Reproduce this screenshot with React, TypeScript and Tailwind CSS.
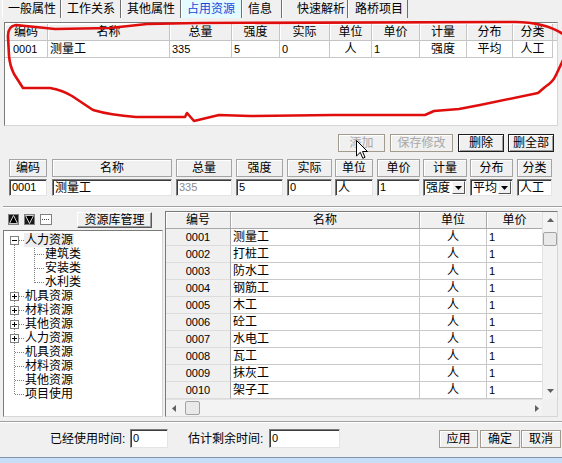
import React from 'react';

const tabs = [
  { label: '一般属性', cls: 'w-[59px] pl-[5px]', sel: false },
  { label: '工作关系', cls: 'w-[60px] pl-[5px]', sel: false },
  { label: '其他属性', cls: 'w-[60px] pl-[5px]', sel: false },
  { label: '占用资源', cls: 'w-[61px] pl-[5px]', sel: true },
  { label: '信息', cls: 'w-[40px] pl-[5px]', sel: false },
  { label: '快速解析', cls: 'w-[66px] pl-[14px]', sel: false },
  { label: '路桥项目', cls: 'w-[60px] pl-[6px]', sel: false },
];

const topCols = [
  { label: '编码', w: 'w-[43px]', v: '0001', a: 'pl-[8px] text-[11px]' },
  { label: '名称', w: 'w-[122px]', v: '测量工', a: 'pl-[2px]' },
  { label: '总量', w: 'w-[62px]', v: '335', a: 'pl-[2px] text-[11px]' },
  { label: '强度', w: 'w-[48px]', v: '5', a: 'pl-[2px] text-[11px]' },
  { label: '实际', w: 'w-[50px]', v: '0', a: 'pl-[2px] text-[11px]' },
  { label: '单位', w: 'w-[42px]', v: '人', a: 'justify-center' },
  { label: '单价', w: 'w-[48px]', v: '1', a: 'pl-[2px] text-[11px]' },
  { label: '计量', w: 'w-[47px]', v: '强度', a: 'justify-center' },
  { label: '分布', w: 'w-[46px]', v: '平均', a: 'justify-center' },
  { label: '分类', w: 'w-[40px]', v: '人工', a: 'justify-center' },
];

const editCols = [
  { label: '编码', cls: 'ml-[9px] w-[38px]', v: '0001', kind: 'num' },
  { label: '名称', cls: 'ml-[5px] w-[120px]', v: '测量工', kind: 'text' },
  { label: '总量', cls: 'ml-[4px] w-[56px]', v: '335', kind: 'dis' },
  { label: '强度', cls: 'ml-[4px] w-[47px]', v: '5', kind: 'num' },
  { label: '实际', cls: 'ml-[4px] w-[45px]', v: '0', kind: 'num' },
  { label: '单位', cls: 'ml-[3px] w-[38px]', v: '人', kind: 'text' },
  { label: '单价', cls: 'ml-[4px] w-[43px]', v: '1', kind: 'num' },
  { label: '计量', cls: 'ml-[3px] w-[44px]', v: '强度', kind: 'combo' },
  { label: '分布', cls: 'ml-[3px] w-[43px]', v: '平均', kind: 'combo' },
  { label: '分类', cls: 'ml-[4px] w-[35px]', v: '人工', kind: 'text' },
];

const treeRows = [
  { t: '人力资源', lvl: 0, box: 'minus', sel: true },
  { t: '建筑类', lvl: 1, box: '', sel: false },
  { t: '安装类', lvl: 1, box: '', sel: false },
  { t: '水利类', lvl: 1, box: '', sel: false },
  { t: '机具资源', lvl: 0, box: 'plus', sel: false },
  { t: '材料资源', lvl: 0, box: 'plus', sel: false },
  { t: '其他资源', lvl: 0, box: 'plus', sel: false },
  { t: '人力资源', lvl: 0, box: 'plus', sel: false },
  { t: '机具资源', lvl: 0, box: '', sel: false },
  { t: '材料资源', lvl: 0, box: '', sel: false },
  { t: '其他资源', lvl: 0, box: '', sel: false },
  { t: '项目使用', lvl: 0, box: '', sel: false },
];

const gridRows = [
  ['0001', '测量工'],
  ['0002', '打桩工'],
  ['0003', '防水工'],
  ['0004', '钢筋工'],
  ['0005', '木工'],
  ['0006', '砼工'],
  ['0007', '水电工'],
  ['0008', '瓦工'],
  ['0009', '抹灰工'],
  ['0010', '架子工'],
];

const sunken =
  'border border-t-[#7c7c7c] border-l-[#7c7c7c] border-r-[#e4e4e4] border-b-[#e4e4e4] shadow-[inset_1px_1px_0_#3c3c3c]';

function TriUp() {
  return (
    <svg width="7" height="4" viewBox="0 0 7 4">
      <path d="M0 4 L3.5 0 L7 4Z" fill="#606060" />
    </svg>
  );
}
function TriDown() {
  return (
    <svg width="7" height="4" viewBox="0 0 7 4">
      <path d="M0 0 L3.5 4 L7 0Z" fill="#606060" />
    </svg>
  );
}
function TriLeft() {
  return (
    <svg width="4" height="7" viewBox="0 0 4 7">
      <path d="M4 0 L0 3.5 L4 7Z" fill="#606060" />
    </svg>
  );
}
function TriRight() {
  return (
    <svg width="4" height="7" viewBox="0 0 4 7">
      <path d="M0 0 L4 3.5 L0 7Z" fill="#606060" />
    </svg>
  );
}

function TreeLines() {
  const cy = (i: number) => 9 + 14 * i + 0.5;
  return (
    <svg className="absolute left-0 top-0" width="158" height="185" viewBox="0 0 158 185" shapeRendering="crispEdges">
      <line x1="10.5" y1={cy(0)} x2="10.5" y2={cy(11)} stroke="#808080" strokeDasharray="1 1" />
      <line x1="30.5" y1={cy(0) + 5} x2="30.5" y2={cy(3)} stroke="#808080" strokeDasharray="1 1" />
      {treeRows.map((r, i) =>
        r.lvl === 0 ? (
          <line key={'s' + i} x1="11" y1={cy(i)} x2="20" y2={cy(i)} stroke="#808080" strokeDasharray="1 1" />
        ) : (
          <line key={'s' + i} x1="31" y1={cy(i)} x2="40" y2={cy(i)} stroke="#808080" strokeDasharray="1 1" />
        )
      )}
      {treeRows.map((r, i) =>
        r.box ? (
          <g key={'b' + i}>
            <rect x="6.5" y={cy(i) - 4} width="8" height="8" fill="#fff" stroke="#808080" />
            <line x1="8" y1={cy(i)} x2="13" y2={cy(i)} stroke="#000" />
            {r.box === 'plus' ? <line x1="10.5" y1={cy(i) - 2.5} x2="10.5" y2={cy(i) + 2.5} stroke="#000" /> : null}
          </g>
        ) : null
      )}
    </svg>
  );
}

export default function App() {
  return (
    <div className="relative w-[562px] h-[463px] overflow-hidden bg-[#f0f0f0] text-[12px] leading-none text-black font-['Liberation_Sans','Noto_Sans_CJK_SC',sans-serif] flex flex-col">
      {/* Tabs */}
      <div className="flex h-[18px] pl-[2px]">
        {tabs.map((t) => (
          <div
            key={t.label}
            className={`${t.cls} h-full flex items-center border-l border-l-white border-r border-r-[#6e6e6e] ${
              t.sel ? 'bg-[#e4fbff] text-[#1848dc]' : ''
            }`}
          >
            {t.label}
          </div>
        ))}
      </div>

      {/* Top list */}
      <div className="mt-[4px] ml-[4px] w-[554px] h-[104px] bg-white border border-t-[#7a7a7a] border-l-[#7a7a7a] border-r-[#d6d6d6] border-b-[#d6d6d6] pt-[1px]">
        <div className="flex h-[17px]">
          {topCols.map((c) => (
            <div
              key={c.label}
              className={`${c.w} h-full flex items-center justify-center bg-[#f0f0f0] border-r border-b border-[#c4c4c4] shadow-[inset_1px_1px_0_#fff]`}
            >
              {c.label}
            </div>
          ))}
          <div className="flex-1 h-full bg-[#f0f0f0] border-b border-[#c4c4c4]" />
        </div>
        <div className="flex h-[17px]">
          {topCols.map((c) => (
            <div key={c.label} className={`${c.w} ${c.a} h-full flex items-center border-r border-b border-[#c8c8c8]`}>
              {c.v}
            </div>
          ))}
        </div>
      </div>

      {/* Buttons */}
      <div className="mt-[8px] h-[18px] flex">
        <div className="ml-[338px] w-[47px] h-full flex items-center justify-center border border-[#a39a8e] shadow-[inset_1px_1px_0_#fff] text-[#a8a8a8]">
          添加
        </div>
        <div className="ml-[5px] w-[63px] h-full flex items-center justify-center border border-[#a39a8e] shadow-[inset_1px_1px_0_#fff] text-[#a8a8a8]">
          保存修改
        </div>
        <div className="ml-[5px] w-[46px] h-full flex items-center justify-center border border-[#1e1e1e] shadow-[inset_1px_1px_0_#fff,inset_-1px_-1px_0_#a0a0a0]">
          删除
        </div>
        <div className="ml-[4px] w-[46px] h-full flex items-center justify-center border border-[#1e1e1e] shadow-[inset_1px_1px_0_#fff,inset_-1px_-1px_0_#a0a0a0]">
          删全部
        </div>
      </div>

      {/* Edit headers */}
      <div className="mt-[7px] h-[18px] flex">
        {editCols.map((c) => (
          <div
            key={c.label}
            className={`${c.cls} h-full flex items-center justify-center border border-[#a4a4a4] shadow-[inset_1px_1px_0_#fff]`}
          >
            {c.label}
          </div>
        ))}
      </div>

      {/* Edit inputs */}
      <div className="mt-[2px] h-[17px] flex">
        {editCols.map((c) => (
          <div key={c.label} className={`${c.cls} h-full bg-white ${sunken} flex items-center`}>
            {c.kind === 'combo' ? (
              <>
                <span className="pl-[2px] flex-1">{c.v}</span>
                <span className="w-[13px] h-[13px] mr-[1px] bg-[#f0f0f0] border border-t-white border-l-white border-r-[#555] border-b-[#555] flex items-center justify-center">
                  <svg width="7" height="4" viewBox="0 0 7 4">
                    <path d="M0 0 L3.5 4 L7 0Z" fill="#000" />
                  </svg>
                </span>
              </>
            ) : (
              <span
                className={`pl-[2px] ${c.kind === 'num' ? 'text-[11px]' : ''} ${c.kind === 'dis' ? 'text-[11px] text-[#8a8a8a]' : ''}`}
              >
                {c.v}
              </span>
            )}
          </div>
        ))}
      </div>

      {/* Separator */}
      <div className="mt-[10px] ml-[3px] h-[2px] border-t border-t-[#a0a0a0] border-b border-b-white" />

      {/* Lower area */}
      <div className="mt-[3px] h-[206px] flex">
        {/* Left panel */}
        <div className="ml-[3px] w-[160px] flex flex-col">
          <div className="h-[17px] flex items-center">
            <svg className="ml-[5px]" width="11" height="11" viewBox="0 0 11 11">
              <rect x="0.5" y="0.5" width="10" height="10" fill="#1a1a1a" stroke="#808080" />
              <path d="M1.5 9.5 L5.5 1.5 L9.5 9.5Z" fill="#000" stroke="#fff" strokeWidth="0.8" />
            </svg>
            <svg className="ml-[5px]" width="11" height="11" viewBox="0 0 11 11">
              <rect x="0.5" y="0.5" width="10" height="10" fill="#1a1a1a" stroke="#808080" />
              <path d="M1.5 1.5 L5.5 9.5 L9.5 1.5Z" fill="#000" stroke="#fff" strokeWidth="0.8" />
            </svg>
            <svg className="ml-[5px]" width="12" height="11" viewBox="0 0 12 11" shapeRendering="crispEdges">
              <rect x="0.5" y="0.5" width="11" height="10" fill="#fff" stroke="#808080" />
              <line x1="2" y1="5.5" x2="10" y2="5.5" stroke="#404040" strokeDasharray="1 1" />
            </svg>
            <div className="ml-[25px] w-[75px] h-[16px] flex items-center justify-center border border-t-white border-l-white border-r-[#5a5a5a] border-b-[#5a5a5a] shadow-[inset_-1px_-1px_0_#a0a0a0]">
              资源库管理
            </div>
          </div>
          <div className={`mt-[2px] h-[187px] relative bg-white border border-t-[#7a7a7a] border-l-[#7a7a7a] border-r-[#d6d6d6] border-b-[#d6d6d6] pt-[2px]`}>
            <TreeLines />
            {treeRows.map((r, i) => (
              <div key={i} className={`relative h-[14px] flex items-center ${r.lvl === 0 ? 'pl-[20px]' : 'pl-[40px]'}`}>
                <span className={`px-[1px] h-[14px] flex items-center ${r.sel ? 'bg-[#ededed]' : ''}`}>{r.t}</span>
              </div>
            ))}
          </div>
        </div>

        {/* Right grid */}
        <div className="ml-[2px] w-[393px] h-[206px] flex bg-white border border-t-[#7a7a7a] border-l-[#7a7a7a] border-r-[#d6d6d6] border-b-[#d6d6d6]">
          <div className="w-[376px] flex flex-col">
            <div className="h-[17px] flex">
              <div className="w-[65px] h-full flex items-center justify-center bg-[#f0f0f0] border-r border-b border-[#a8a8a8] shadow-[inset_1px_1px_0_#fff]">
                编号
              </div>
              <div className="w-[189px] h-full flex items-center justify-center bg-[#f0f0f0] border-r border-b border-[#a8a8a8] shadow-[inset_1px_1px_0_#fff]">
                名称
              </div>
              <div className="w-[67px] h-full flex items-center justify-center bg-[#f0f0f0] border-r border-b border-[#a8a8a8] shadow-[inset_1px_1px_0_#fff]">
                单位
              </div>
              <div className="w-[55px] h-full flex items-center justify-center bg-[#f0f0f0] border-b border-[#a8a8a8] shadow-[inset_1px_1px_0_#fff]">
                单价
              </div>
            </div>
            {gridRows.map((r) => (
              <div key={r[0]} className="h-[17px] flex">
                <div className="w-[65px] h-full flex items-center justify-center bg-[#f0f0f0] border-r border-b border-r-[#a8a8a8] border-b-[#dcdcdc] text-[11px]">
                  {r[0]}
                </div>
                <div className="w-[189px] h-full flex items-center pl-[2px] border-r border-b border-[#c8c8c8]">{r[1]}</div>
                <div className="w-[67px] h-full flex items-center justify-center border-r border-b border-[#c8c8c8]">人</div>
                <div className="w-[55px] h-full flex items-center pl-[2px] border-b border-[#c8c8c8] text-[11px]">1</div>
              </div>
            ))}
            <div className="h-[17px] flex items-center bg-[#f3f3f3] border-t border-[#e2e2e2]">
              <div className="w-[16px] flex justify-center">
                <TriLeft />
              </div>
              <div className="ml-[3px] w-[15px] h-[14px] rounded-[2px] border border-[#a3a3a3] bg-[#e9e9e9]" />
              <div className="ml-auto mr-[2px] w-[6px] flex justify-center">
                <TriRight />
              </div>
            </div>
          </div>
          <div className="w-[15px] flex flex-col">
            <div className="h-[187px] bg-[#f3f3f3] border-l border-[#e2e2e2] flex flex-col items-center">
              <div className="h-[16px] flex items-center justify-center">
                <TriUp />
              </div>
              <div className="mt-[4px] w-[14px] h-[14px] rounded-[2px] border border-[#a3a3a3] bg-[#e9e9e9]" />
              <div className="mt-auto h-[16px] flex items-center justify-center">
                <TriDown />
              </div>
            </div>
            <div className="h-[17px] bg-[#f0f0f0]" />
          </div>
        </div>
      </div>

      {/* Footer separator */}
      <div className="mt-[4px] h-[2px] border-t border-t-[#a0a0a0] border-b border-b-white" />

      {/* Footer */}
      <div className="mt-[6px] h-[19px] flex items-center">
        <span className="ml-[50px] w-[80px]">已经使用时间:</span>
        <div className={`w-[38px] h-[19px] bg-white ${sunken} flex items-center pl-[2px] text-[11px]`}>0</div>
        <span className="ml-[20px] w-[81px]">估计剩余时间:</span>
        <div className={`w-[71px] h-[19px] bg-white ${sunken} flex items-center pl-[2px] text-[11px]`}>0</div>
        <div className="ml-auto flex">
          <div className="w-[39px] h-[18px] flex items-center justify-center border border-[#a39a8e] shadow-[inset_1px_1px_0_#fff]">应用</div>
          <div className="ml-[2px] w-[40px] h-[18px] flex items-center justify-center border border-[#a39a8e] shadow-[inset_1px_1px_0_#fff]">确定</div>
          <div className="ml-[1px] mr-[1px] w-[40px] h-[18px] flex items-center justify-center border border-[#a39a8e] shadow-[inset_1px_1px_0_#fff]">取消</div>
        </div>
      </div>

      {/* Bottom blue strip */}
      <div className="mt-auto h-[6px] border-t border-[#7f93aa] bg-[#c6def6]" />

      {/* Red hand-drawn annotation */}
      <svg className="absolute left-0 top-0 pointer-events-none" width="562" height="463" viewBox="0 0 562 463">
        <path
          d="M566 36 C552 26 535 22 515 22 L200 23 L147 24 L110 28 L55 29 L16 25 Q8 26 8 36 L9 56 Q10 66 14 74 L23 88 L50 88 Q62 90 72 96 L93 110 Q110 115 136 117 L185 117 L187 113 L194 121 L219 115 L250 116 L333 115 L425 115 L434 111 L459 109 L480 105 L538 93 L545 87 Q553 82 556 75 L564 58"
          fill="none"
          stroke="#e00d0d"
          strokeWidth="2.6"
          strokeLinejoin="round"
          strokeLinecap="round"
        />
      </svg>

      {/* Mouse cursor */}
      <svg className="absolute left-[356px] top-[140px] pointer-events-none" width="13" height="20" viewBox="0 0 13 20">
        <path d="M0.5 0.5 L0.5 16 L4.3 12.3 L6.8 18.3 L9 17.3 L6.5 11.5 L11.5 11.5 Z" fill="#fff" stroke="#000" strokeWidth="1" strokeLinejoin="miter" />
      </svg>
    </div>
  );
}
